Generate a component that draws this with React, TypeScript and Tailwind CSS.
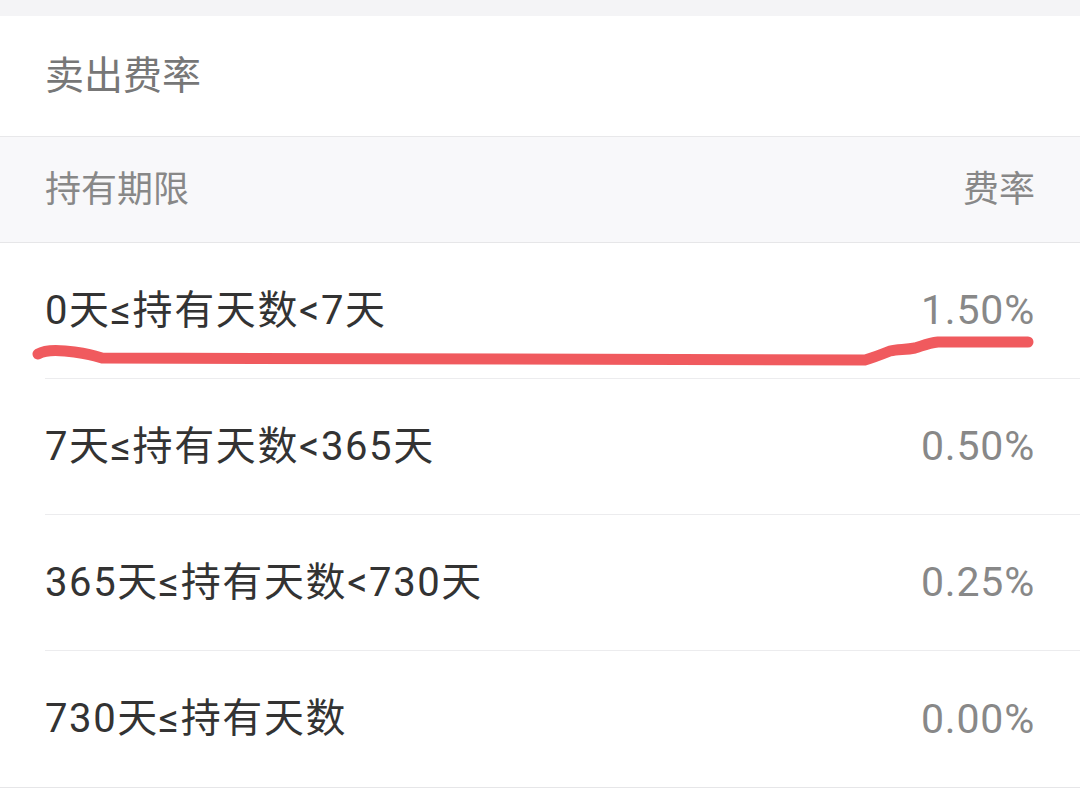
import React from "react";

interface FeeRow {
  period: string;
  rate: string;
}

const rows: FeeRow[] = [
  { period: "0天≤持有天数<7天", rate: "1.50%" },
  { period: "7天≤持有天数<365天", rate: "0.50%" },
  { period: "365天≤持有天数<730天", rate: "0.25%" },
  { period: "730天≤持有天数", rate: "0.00%" },
];

export default function App() {
  return (
    <div
      className="relative w-full h-[806px] bg-white overflow-hidden"
      style={{ fontFamily: "Roboto, 'Noto Sans CJK SC', sans-serif" }}
    >
      <div className="h-4 bg-[#f4f4f6]" />

      <div className="h-[121px] flex items-center px-[45px] border-b border-[#e8e8ea]">
        <span className="text-[39px] text-[#777] leading-none">卖出费率</span>
      </div>

      <div className="h-[106px] flex items-center justify-between px-[45px] bg-[#f8f8fa] border-b border-[#e6e6e8]">
        <span className="text-[36px] text-[#888] leading-none">持有期限</span>
        <span className="text-[36px] text-[#888] leading-none">费率</span>
      </div>

      <div className="flex flex-col">
        {rows.map((row, i) => (
          <div
            key={row.period}
            className={`pl-[45px] ${i === rows.length - 1 ? "border-b border-[#e6e6e8]" : ""}`}
          >
            <div
              className={`h-[136px] flex items-center justify-between pr-[45px] ${
                i < rows.length - 1 ? "border-b border-[#ececee]" : ""
              }`}
            >
              <span className="text-[40px] text-[#333] leading-none tracking-[1.6px]">{row.period}</span>
              <span className="text-[41px] text-[#888] leading-none tracking-[0.8px]">{row.rate}</span>
            </div>
          </div>
        ))}
      </div>

      {/* hand-drawn red underline */}
      <svg
        className="absolute left-0 top-0 pointer-events-none"
        width="1080"
        height="806"
        viewBox="0 0 1080 806"
      >
        <path
          d="M38 354 C45 350 55 350 65 351 C75 352 85 353 95 356 L102 358 L865 360 C872 358 880 355 890 351 C898 349 905 350 915 348 C922 346 928 343 938 342 L1028 342"
          fill="none"
          stroke="#f05a5e"
          strokeWidth="11"
          strokeLinecap="round"
          strokeLinejoin="round"
        />
      </svg>
    </div>
  );
}
